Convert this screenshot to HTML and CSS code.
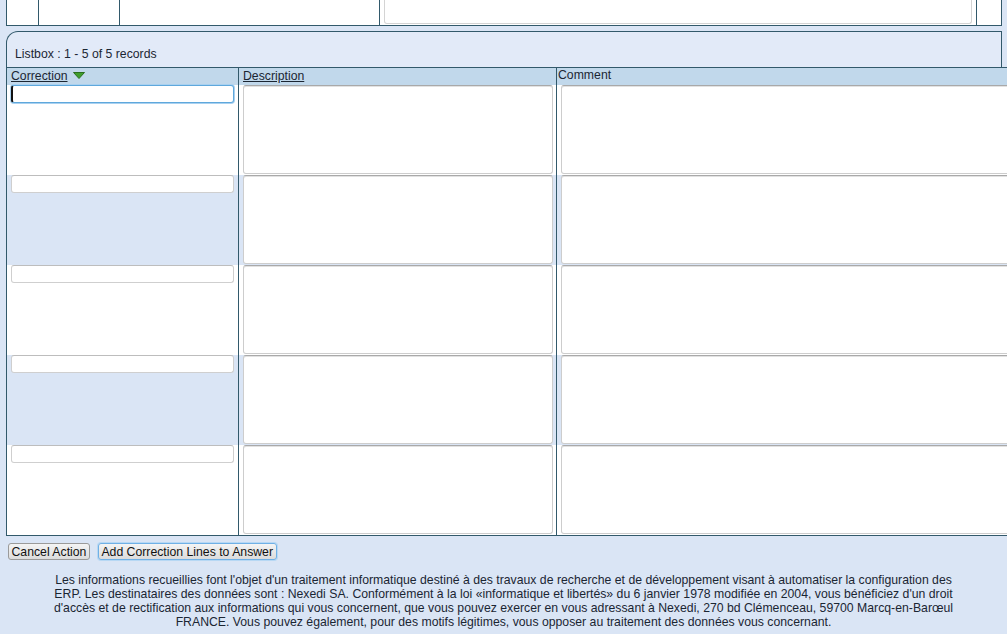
FILE: index.html
```html
<!DOCTYPE html>
<html>
<head>
<meta charset="utf-8">
<link rel="stylesheet" href="styles.css">
</head>
<body>
<div class="page">
  <div class="toptable">
    <div class="tcell c1"></div>
    <div class="tcell c2"></div>
    <div class="tcell c3"></div>
    <div class="tcell c4"><div class="tarea"></div></div>
    <div class="tcell c5"></div>
  </div>

  <div class="listbox-title">Listbox : 1 - 5 of 5 records</div>

  <div class="grid">
    <div class="hcell col1"><a href="#">Correction</a>
      <svg class="sort" width="12" height="7" viewBox="0 0 12 7"><polygon points="0.5,0.5 11.5,0.5 6,6.5" fill="#3f9e2c" stroke="#2b6e1e" stroke-width="1"/></svg>
    </div>
    <div class="hcell col2"><a href="#">Description</a></div>
    <div class="hcell col3">Comment</div>

    <div class="cell col1"><input class="inp focus" type="text"></div>
    <div class="cell col2"><textarea></textarea></div>
    <div class="cell col3"><textarea></textarea></div>

    <div class="cell col1 alt"><input class="inp" type="text"></div>
    <div class="cell col2 alt"><textarea></textarea></div>
    <div class="cell col3 alt"><textarea></textarea></div>

    <div class="cell col1"><input class="inp" type="text"></div>
    <div class="cell col2"><textarea></textarea></div>
    <div class="cell col3"><textarea></textarea></div>

    <div class="cell col1 alt"><input class="inp" type="text"></div>
    <div class="cell col2 alt"><textarea></textarea></div>
    <div class="cell col3 alt"><textarea></textarea></div>

    <div class="cell col1"><input class="inp" type="text"></div>
    <div class="cell col2"><textarea></textarea></div>
    <div class="cell col3"><textarea></textarea></div>
  </div>

  <div class="buttons">
    <button class="btn">Cancel Action</button>
    <button class="btn btn-focus">Add Correction Lines to Answer</button>
  </div>

  <p class="footer">Les informations recueillies font l'objet d'un traitement informatique destiné à des travaux de recherche et de développement visant à automatiser la configuration des<br>ERP. Les destinataires des données sont : Nexedi SA. Conformément à la loi «informatique et libertés» du 6 janvier 1978 modifiée en 2004, vous bénéficiez d'un droit<br>d'accès et de rectification aux informations qui vous concernent, que vous pouvez exercer en vous adressant à Nexedi, 270 bd Clémenceau, 59700 Marcq-en-Barœul<br>FRANCE. Vous pouvez également, pour des motifs légitimes, vous opposer au traitement des données vous concernant.</p>
</div>
</body>
</html>
```

FILE: styles.css
```css
html, body {
  margin: 0;
  padding: 0;
  background: #dae5f5;
  overflow: hidden;
}
body {
  font-family: "Liberation Sans", Arial, sans-serif;
  font-size: 12.25px;
  color: #1b2633;
  width: 1007px;
  height: 634px;
}
.page {
  padding-left: 6px;
  width: 1200px;
}

/* top (scrolled) table */
.toptable {
  display: flex;
  height: 25px;
  width: 996px;
  border-bottom: 1px solid #32596b;
  box-sizing: content-box;
}
.tcell {
  background: #fff;
  border-left: 1px solid #32596b;
  box-sizing: border-box;
  height: 25px;
}
.c1 { width: 32px; }
.c2 { width: 81px; }
.c3 { width: 260px; }
.c4 { width: 597px; padding: 0 4px 1px 4px; }
.c5 { width: 26px; border-right: 1px solid #32596b; }
.tarea {
  height: 24px;
  border: 1px solid #d4d4d4;
  border-top: none;
  border-radius: 0 0 3px 3px;
  box-sizing: border-box;
}

/* listbox header */
.listbox-title {
  margin-top: 5px;
  width: 996px;
  height: 36px;
  box-sizing: border-box;
  border: 1px solid #32596b;
  border-bottom: none;
  border-top-left-radius: 12px;
  background: #e2eaf8;
  padding: 15px 0 0 8px;
  line-height: 14px;
}

/* listbox grid */
.grid {
  display: grid;
  grid-template-columns: 232px 318px 600px;
  grid-template-rows: 17px repeat(5, 90px);
  border-top: 1px solid #32596b;
  border-bottom: 1px solid #32596b;
  border-left: 1px solid #32596b;
  width: 1150px;
}
.hcell {
  background: #c1d8eb;
  line-height: 15px;
  padding: 1px 0 0 4px;
  border-right: 1px solid #32596b;
  box-sizing: border-box;
  white-space: nowrap;
}
.hcell.col3 { padding-left: 1px; padding-top: 0; }
.hcell a {
  color: #1b2633;
  text-decoration: underline;
}
.sort {
  vertical-align: 1px;
  margin-left: 2px;
}
.cell {
  background: #fff;
  border-right: 1px solid #32596b;
  box-sizing: border-box;
  padding: 0 3px 0 4px;
}
.cell.alt { background: #dae5f5; }

.inp {
  display: block;
  width: 223px;
  height: 18px;
  margin: 0;
  box-sizing: border-box;
  border: 1px solid #cfcfcf;
  border-top-color: #bdbdbd;
  border-radius: 3px;
  background: #fff;
  padding: 0 2px;
  font: 12px "Liberation Sans", sans-serif;
  outline: none;
}
.inp.focus {
  border: 1px solid #5fa8dc;
  box-shadow: 0 0 0 1px #a9d1f0;
  border-left: 2px solid #111;
}
textarea {
  display: block;
  width: 100%;
  height: 89px;
  margin: 0;
  box-sizing: border-box;
  border: 1px solid #cdcdcd;
  border-top-color: #a9a9a9;
  border-radius: 3px;
  box-shadow: inset 0 1px 0 #e2e2e2;
  background: #fff;
  resize: none;
  font: 12px "Liberation Sans", sans-serif;
  outline: none;
}
.col3 textarea { width: 500px; }

/* buttons */
.buttons {
  display: flex;
  gap: 8px;
  padding: 7px 0 0 2px;
}
.btn {
  height: 17px;
  margin: 0;
  padding: 0 2.5px;
  font: 12.25px "Liberation Sans", sans-serif;
  color: #111;
  line-height: 14px;
  border: 1px solid #9a9a9a;
  border-radius: 3px;
  background: linear-gradient(#f4f4f4, #dcdcdc);
}
.btn-focus {
  border-color: #6fb0e6;
  box-shadow: 0 0 0 1px #b7d8f4;
}

/* footer */
.footer {
  width: 1007px;
  margin: 13px 0 0 -6px;
  text-align: center;
  line-height: 14px;
  color: #1b2633;
}
```
